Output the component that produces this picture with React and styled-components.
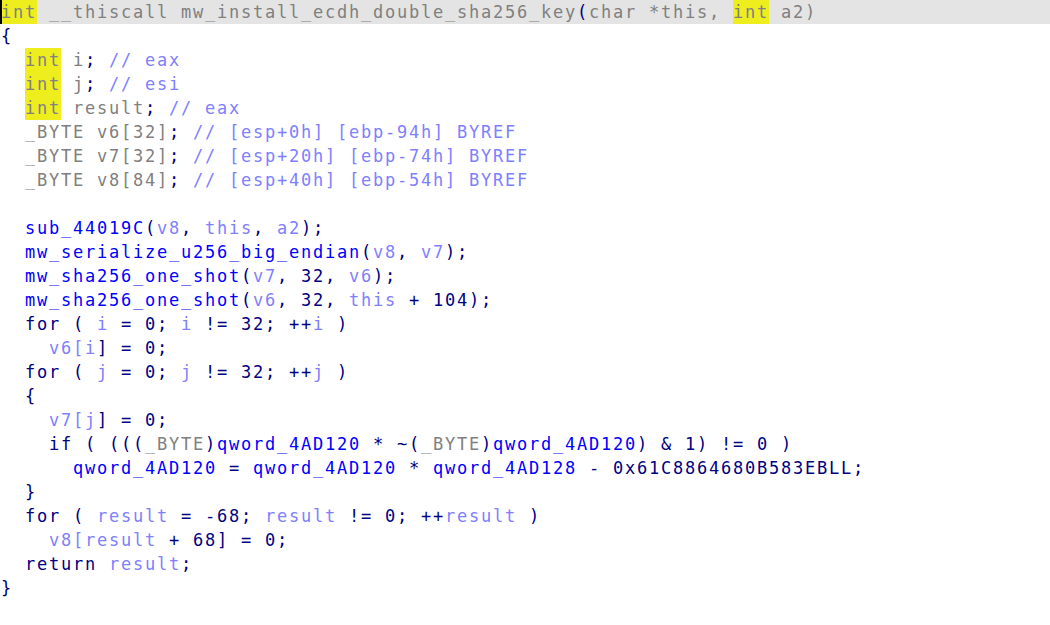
import React from "react"
import styled, { createGlobalStyle } from "styled-components"

const Global = createGlobalStyle`
  html, body {
    margin: 0;
    padding: 0;
    background: #fff;
  }
`

const colors = {
  kw: "#000080",
  fn: "#0000ff",
  var: "#8080ff",
  cm: "#8080ff",
  ty: "#808080",
  num: "#000080",
}

const Pane = styled.div`
  width: 1050px;
  height: 625px;
  background: #ffffff;
  font-family: "DejaVu Sans Mono", "Liberation Mono", monospace;
  font-size: 17px;
  letter-spacing: 1.765px;
  overflow: hidden;
`

const Line = styled.div`
  height: 24px;
  line-height: 24px;
  white-space: pre;
  padding-left: 1px;
  background: ${(p) => (p.$current ? "#e4e4e4" : "transparent")};
`

const Tok = styled.span`
  color: ${(p) => colors[p.$k] || colors.kw};
  display: inline-block;
  background: ${(p) => (p.$hl ? "#eeee1e" : "transparent")};
  box-shadow: ${(p) => (p.$cursor ? "inset 2px 0 0 #000" : "none")};
  margin-left: ${(p) => (p.$cursor ? "-1px" : "0")};
  padding-left: ${(p) => (p.$cursor ? "1px" : "0")};
`

// [kind, text, highlight?]
const lines = [
  [["ty", "int", "hl-cursor"], ["ty", " __thiscall mw_install_ecdh_double_sha256_key"], ["kw", "("], ["ty", "char *this, "], ["ty", "int", "hl"], ["ty", " a2)"]],
  [["kw", "{"]],
  [["kw", "  "], ["ty", "int", "hl"], ["ty", " i"], ["kw", "; "], ["cm", "// eax"]],
  [["kw", "  "], ["ty", "int", "hl"], ["ty", " j"], ["kw", "; "], ["cm", "// esi"]],
  [["kw", "  "], ["ty", "int", "hl"], ["ty", " result"], ["kw", "; "], ["cm", "// eax"]],
  [["ty", "  _BYTE v6[32]"], ["kw", "; "], ["cm", "// [esp+0h] [ebp-94h] BYREF"]],
  [["ty", "  _BYTE v7[32]"], ["kw", "; "], ["cm", "// [esp+20h] [ebp-74h] BYREF"]],
  [["ty", "  _BYTE v8[84]"], ["kw", "; "], ["cm", "// [esp+40h] [ebp-54h] BYREF"]],
  [],
  [["kw", "  "], ["fn", "sub_44019C"], ["kw", "("], ["var", "v8"], ["kw", ", "], ["var", "this"], ["kw", ", "], ["var", "a2"], ["kw", ");"]],
  [["kw", "  "], ["fn", "mw_serialize_u256_big_endian"], ["kw", "("], ["var", "v8"], ["kw", ", "], ["var", "v7"], ["kw", ");"]],
  [["kw", "  "], ["fn", "mw_sha256_one_shot"], ["kw", "("], ["var", "v7"], ["kw", ", 32, "], ["var", "v6"], ["kw", ");"]],
  [["kw", "  "], ["fn", "mw_sha256_one_shot"], ["kw", "("], ["var", "v6"], ["kw", ", 32, "], ["var", "this"], ["kw", " + 104);"]],
  [["kw", "  for ( "], ["var", "i"], ["kw", " = 0; "], ["var", "i"], ["kw", " != 32; ++"], ["var", "i"], ["kw", " )"]],
  [["kw", "    "], ["var", "v6["], ["var", "i"], ["kw", "] = 0;"]],
  [["kw", "  for ( "], ["var", "j"], ["kw", " = 0; "], ["var", "j"], ["kw", " != 32; ++"], ["var", "j"], ["kw", " )"]],
  [["kw", "  {"]],
  [["kw", "    "], ["var", "v7["], ["var", "j"], ["kw", "] = 0;"]],
  [["kw", "    if ( ((("], ["ty", "_BYTE"], ["kw", ")"], ["fn", "qword_4AD120"], ["kw", " * ~("], ["ty", "_BYTE"], ["kw", ")"], ["fn", "qword_4AD120"], ["kw", ") & 1) != 0 )"]],
  [["kw", "      "], ["fn", "qword_4AD120"], ["kw", " = "], ["fn", "qword_4AD120"], ["kw", " * "], ["fn", "qword_4AD128"], ["kw", " - 0x61C8864680B583EBLL;"]],
  [["kw", "  }"]],
  [["kw", "  for ( "], ["var", "result"], ["kw", " = -68; "], ["var", "result"], ["kw", " != 0; ++"], ["var", "result"], ["kw", " )"]],
  [["kw", "    "], ["var", "v8["], ["var", "result"], ["kw", " + 68] = 0;"]],
  [["kw", "  return "], ["var", "result"], ["kw", ";"]],
  [["kw", "}"]],
]

export default function App() {
  return (
    <>
      <Global />
      <Pane>
        {lines.map((toks, i) => (
          <Line key={i} $current={i === 0}>
            {toks.length === 0 ? " " : null}
            {toks.map(([k, text, flag], j) => (
              <Tok
                key={j}
                $k={k}
                $hl={flag === "hl" || flag === "hl-cursor"}
                $cursor={flag === "hl-cursor"}
              >
                {text}
              </Tok>
            ))}
          </Line>
        ))}
      </Pane>
    </>
  )
}
